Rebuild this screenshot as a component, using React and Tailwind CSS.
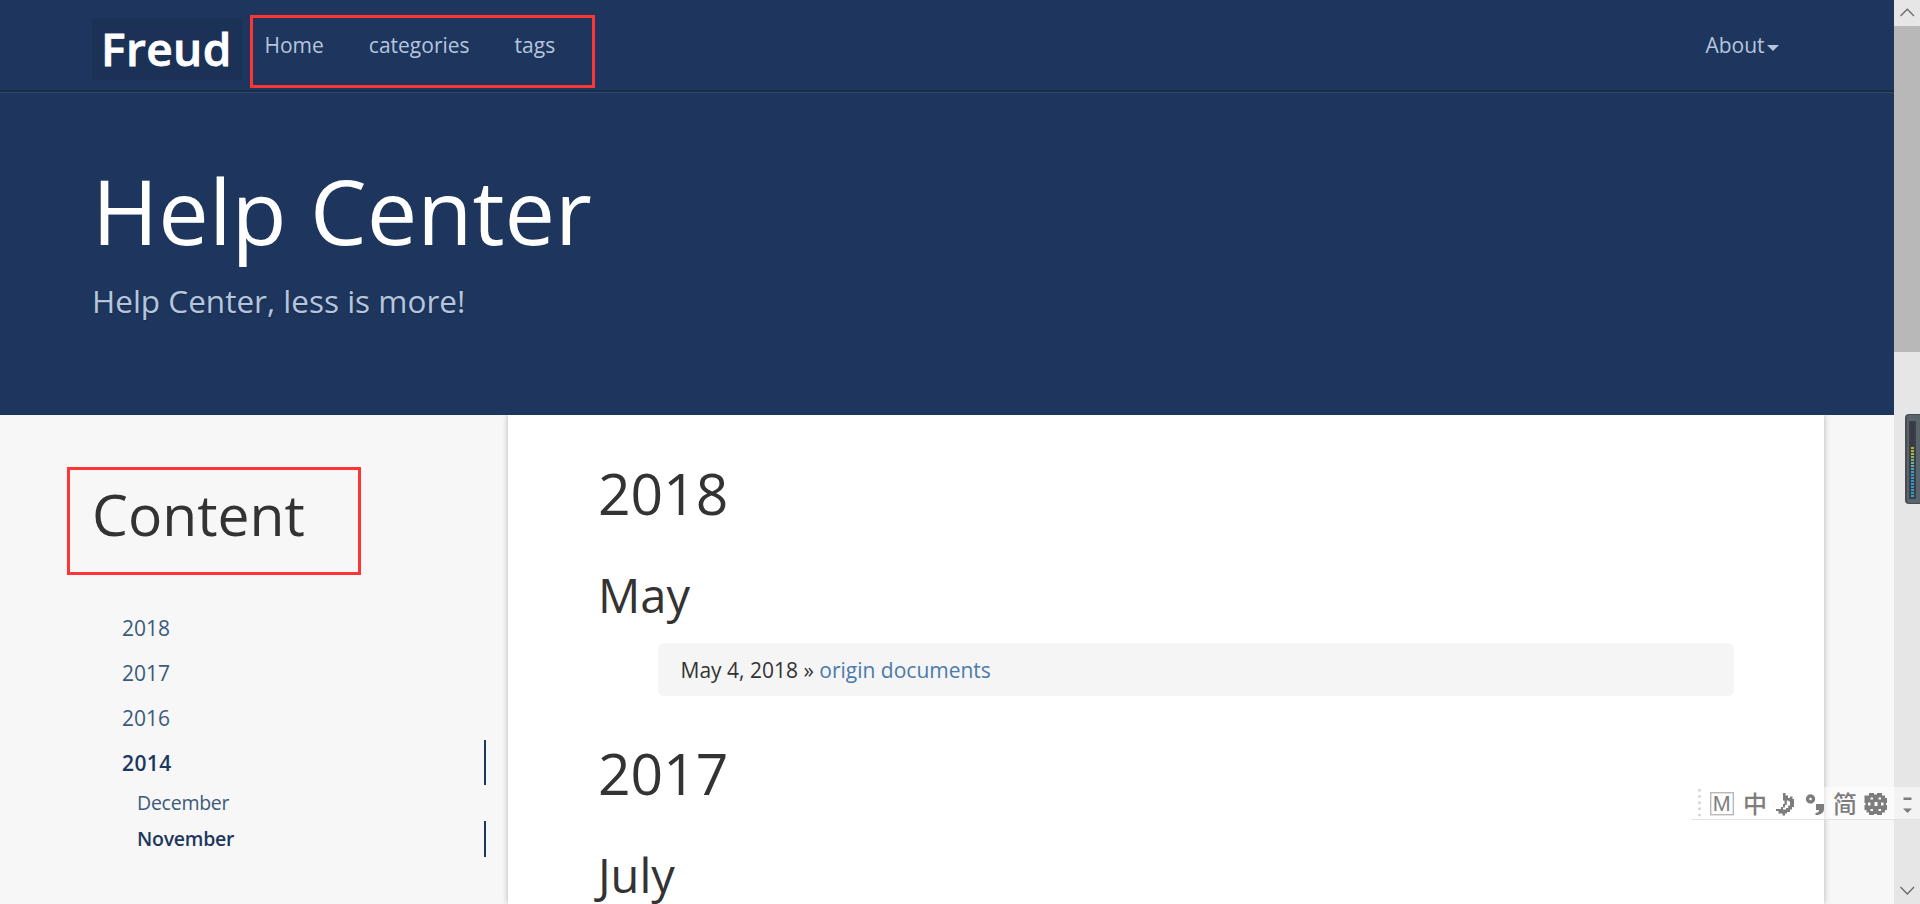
const navLinks = ["Home", "categories", "tags"];

const tocYears = [
  { label: "2018" },
  { label: "2017" },
  { label: "2016" },
  { label: "2014", active: true },
];

const tocMonths = [{ label: "December" }, { label: "November", active: true }];

const meter = [
  "#3a3444", "#3a3444", "#3a3444", "#3a3444", "#3a3444", "#3a3444", "#3a3444", "#3a3444",
  "#b9b02c", "#b9b02c", "#a8b840", "#98b850", "#78b478", "#68b490", "#5cb0a0", "#48a4b8",
  "#3c9cc4", "#349ac8", "#3098c8", "#3098c8", "#3098c8", "#3098c8", "#3098c8", "#3098c8", "#30a0d0",
];

function TopBar() {
  return (
    <div className="h-[93px] border-b border-[#30476a]">
      <div className="flex h-[92px] items-start border-b-2 border-[#192c4c] pl-[92px] pr-[115.5px]">
        <div className="mt-[18px] flex h-[62px] w-[150px] items-start bg-[#1b3156] pl-[9px]">
          <span className="text-[46px] font-semibold leading-[60px] tracking-[0.4px] text-white [-webkit-text-stroke:0.8px_#fff]">
            Freud
          </span>
        </div>
        <nav className="ml-[22.5px] mt-[30px] flex gap-[45px] text-[21px] leading-[30px] text-[#b5c5de]">
          {navLinks.map((l) => (
            <a key={l}>{l}</a>
          ))}
        </nav>
        <a className="ml-auto mt-[30px] flex items-center text-[21px] leading-[30px] text-[#b5c5de]">
          About
          <svg className="ml-[2px] mt-[5px]" width="12" height="6" viewBox="0 0 12 6" fill="currentColor">
            <path d="M0 0H12L6 6Z" />
          </svg>
        </a>
      </div>
    </div>
  );
}

function Hero() {
  return (
    <div className="h-[322px] pl-[92px] pt-[70px]">
      <h1 className="text-[90px] leading-[94px] text-white">Help Center</h1>
      <p className="mt-[21px] text-[31.5px] leading-[45px] text-[#b5c5de] [text-shadow:0_1px_2px_rgba(0,0,0,0.25)]">
        Help Center, less is more!
      </p>
    </div>
  );
}

function Sidebar() {
  return (
    <aside className="w-[508px] shrink-0 pl-[92px] pt-[68px] text-[#3b5b7c]">
      <h1 className="text-[57px] leading-[62px] text-[#333]">Content</h1>
      <ul className="mt-[60px] text-[21px] leading-[47px]">
        {tocYears.map((y) => (
          <li
            key={y.label}
            className={
              y.active
                ? "h-[45px] w-[394px] border-r-2 border-[#1e375e] pl-[30px] font-semibold tracking-[0.4px] text-[#1e375e]"
                : "h-[45px] w-[394px] pl-[30px]"
            }
          >
            {y.label}
          </li>
        ))}
      </ul>
      <ul className="text-[19.5px] leading-[36px] tracking-[-0.25px]">
        {tocMonths.map((m) => (
          <li
            key={m.label}
            className={
              m.active
                ? "h-[36px] w-[394px] border-r-2 border-[#1e375e] pl-[45px] font-semibold text-[#1e375e]"
                : "h-[36px] w-[394px] pl-[45px]"
            }
          >
            {m.label}
          </li>
        ))}
      </ul>
    </aside>
  );
}

function Archive() {
  return (
    <main className="w-[1316px] shrink-0 bg-white pl-[90px] pr-[90px] pt-[47px] text-[#333] shadow-[0_0_6px_rgba(0,0,0,0.28)]">
      <h1 className="text-[57px] leading-[62px]">2018</h1>
      <h2 className="mt-[45px] text-[47px] leading-[53px]">May</h2>
      <ul className="ml-[60px] mt-[21px] h-[53px] rounded-md bg-[#f5f5f5] pl-[22.5px] text-[21px] leading-[55px]">
        <li>
          May 4, 2018 » <a className="text-[#4a7baa]">origin documents</a>
        </li>
      </ul>
      <h1 className="mt-[46px] text-[57px] leading-[62px]">2017</h1>
      <h2 className="mt-[45px] text-[47px] leading-[53px]">July</h2>
    </main>
  );
}

function Scrollbar() {
  return (
    <div className="flex h-[904px] w-[26px] shrink-0 flex-col items-center bg-[#e6e6e6]">
      <svg width="26" height="26" viewBox="0 0 26 26" fill="none" stroke="#6a6a6a" strokeWidth="1.3">
        <path d="M6.5 16L13.3 9.2L20 16" />
      </svg>
      <div className="h-[326px] w-full bg-[#b8b8b8]" />
      <svg className="mt-auto" width="26" height="26" viewBox="0 0 26 26" fill="none" stroke="#6a6a6a" strokeWidth="1.3">
        <path d="M6.5 9L13.3 16L20 9" />
      </svg>
    </div>
  );
}

function LevelMeter() {
  return (
    <div className="absolute left-[1905px] top-[414px] flex h-[90px] w-[15px] rounded-l border-y border-l-2 border-[#4c4b50] bg-[#5a646c] pl-[2px] pt-[6px]">
      <div className="flex h-[78px] w-[7px] flex-col gap-px bg-[#3a4048] px-[2px] pt-[2px]">
        {meter.map((c, i) => (
          <span key={i} className="h-[2px] w-full shrink-0" style={{ backgroundColor: c }} />
        ))}
      </div>
    </div>
  );
}

function ImeBar() {
  return (
    <div className="absolute left-[1692px] top-[787px] h-[33px] w-[228px] border-b border-[#e2e2e2] bg-white/50">
      <svg width="228" height="33" viewBox="0 0 228 33" fill="#7d7d7d">
        <path d="M7.5 2V33" stroke="#d0d0d0" strokeWidth="2.4" strokeDasharray="2.5 3.7" />
        <rect x="18.7" y="5.7" width="22.6" height="22" fill="none" stroke="#b9b9b9" strokeWidth="1.4" />
        <text x="29.8" y="24" fontSize="21.5" textAnchor="middle" fontFamily="Liberation Sans, sans-serif">M</text>
        <text x="63" y="26" fontSize="24" fontWeight="500" textAnchor="middle" fontFamily="Noto Sans CJK SC, sans-serif">中</text>
        <path
          fillRule="evenodd"
          d="M91 6H93.500V8.500H96V11H98V9.500H100.500V12H102V20H100V22.500H98V25H95V26.500H93V28.500H90.500V26.500H86.500V24H84V22H89V20H91V17H92.500V13.500H91ZM94.800 13.500V18H93V20.500H91V22.500H94V21H96.200V18.500H98V14.500H96.500V13.500Z"
        />
        <circle cx="118.500" cy="12" r="3" fill="none" stroke="#7d7d7d" strokeWidth="3.400" />
        <path d="M124 17H132V22C132 26 128 28 123.500 28V26C127 25.500 127 24 127 23H124Z" />
        <text x="153" y="26" fontSize="24" fontWeight="500" textAnchor="middle" fontFamily="Noto Sans CJK SC, sans-serif">简</text>
        <path
          fillRule="evenodd"
          d="M177 6H182V7.500H185V6H190V8.500H193V11H195V16H194V18H195V23H193V25.500H190V28H185V27H182V28H177V25.500H174.500V23H172.500V18H173.500V16H172.500V8.500H177ZM178.500 10.500V12.500H181V10.500ZM186.500 10.500V12.500H189V10.500ZM176 15.500V18.500H178.500V15.500ZM189 15.500V18.500H191.500V15.500ZM178.500 22V24H181V22ZM186.500 22V24H189V22ZM182.500 15V19H185.500V15Z"
        />
        <path d="M211.500 10.500H219.500V13H211.500ZM211 21.500H220L215.500 26Z" />
      </svg>
    </div>
  );
}

export default function App() {
  return (
    <div className="relative flex h-[904px] w-[1920px] overflow-hidden bg-[#f7f7f7] font-['Open_Sans','Noto_Sans_CJK_SC',sans-serif]">
      <div className="flex h-[904px] w-[1894px] shrink-0 flex-col overflow-hidden">
        <header className="relative z-10 h-[415px] shrink-0 bg-[#1e365d]">
          <TopBar />
          <Hero />
        </header>
        <div className="flex flex-1">
          <Sidebar />
          <Archive />
        </div>
      </div>
      <Scrollbar />
      <LevelMeter />
      <ImeBar />
      <div className="absolute left-[250px] top-[15px] z-20 h-[73px] w-[345px] border-[3px] border-[#ff3434]" />
      <div className="absolute left-[67px] top-[467px] z-20 h-[108px] w-[294px] border-[3px] border-[#ff3434]" />
    </div>
  );
}
